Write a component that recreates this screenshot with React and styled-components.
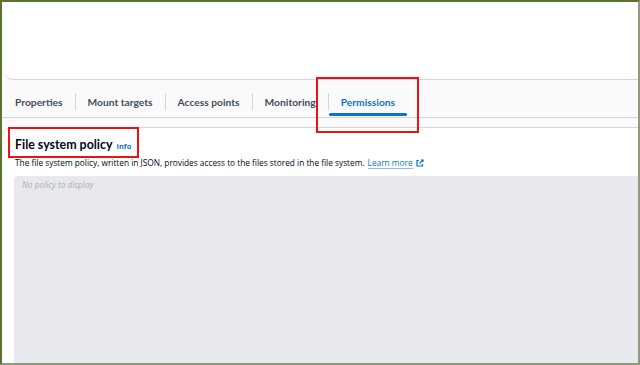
import React from 'react';
import styled, { createGlobalStyle } from 'styled-components';

const GlobalStyle = createGlobalStyle`
  html, body {
    margin: 0;
    padding: 0;
    background: #ffffff;
  }
  body {
    font-family: "Open Sans", "Noto Sans", sans-serif;
    color: #000716;
  }
`;

const Frame = styled.div`
  position: relative;
  box-sizing: border-box;
  width: 640px;
  height: 365px;
  overflow: hidden;
  background: #fafafa;
  border-top: 2px solid #5b7331;
  border-left: 2px solid #5b7331;
  border-right: 2px solid #8d9c80;
  border-bottom: 2px solid #8d9c80;
  display: flex;
  flex-direction: column;
`;

const TopCard = styled.div`
  height: 77px;
  margin-left: 3px;
  background: #ffffff;
  border-bottom: 1px solid #d5d5d9;
  border-bottom-left-radius: 8px;
  flex-shrink: 0;
`;

const TabBar = styled.div`
  display: flex;
  align-items: stretch;
  height: 37px;
  padding-left: 1px;
  border-bottom: 1px solid #d5d5d9;
  flex-shrink: 0;
`;

const Tab = styled.div`
  position: relative;
  display: flex;
  align-items: center;
  padding: 7px 12px 0;
  font-family: Lato, "Open Sans", sans-serif;
  font-size: 10.25px;
  font-weight: 700;
  color: ${(p) => (p.$active ? '#0972d3' : '#414d5c')};

  &::after {
    content: '';
    position: absolute;
    left: 0;
    right: 0;
    bottom: 1px;
    height: 3px;
    border-radius: 2px;
    background: ${(p) => (p.$active ? '#0972d3' : 'transparent')};
  }
`;

const Divider = styled.span`
  align-self: center;
  width: 1px;
  height: 17px;
  margin-top: 5px;
  background: #d5d5d9;
`;

const Spacer = styled.div`
  height: 9px;
  flex-shrink: 0;
`;

const ContentCard = styled.section`
  flex: 1;
  margin-left: 2px;
  background: #ffffff;
  border-top: 1px solid #d5d5d9;
  border-top-left-radius: 8px;
  padding: 8px 0 0 11px;
  display: flex;
  flex-direction: column;
`;

const Heading = styled.h2`
  display: flex;
  align-items: baseline;
  gap: 4px;
  margin: 0;
  font-family: Lato, "Open Sans", sans-serif;
  font-size: 12.4px;
  font-weight: 700;
  color: #000716;
  line-height: 18px;
`;

const InfoLink = styled.span`
  font-family: "Open Sans", sans-serif;
  font-size: 7.4px;
  font-weight: 700;
  color: #0972d3;
`;

const Description = styled.p`
  margin: 2px 0 0;
  font-size: 8.3px;
  line-height: 12px;
  color: #000716;
  display: flex;
  align-items: center;
`;

const LearnMore = styled.span`
  margin-left: 3px;
  color: #0972d3;
  border-bottom: 1px solid #8cbcf0;
  line-height: 10px;
`;

const ExternalIcon = styled.svg`
  margin-left: 3px;
  width: 8px;
  height: 8px;
`;

const PolicyBox = styled.div`
  flex: 1;
  margin-top: 7px;
  margin-left: -1px;
  background: #e9e9ed;
  border-top-left-radius: 4px;
  padding: 3px 8px;
  font-size: 8.3px;
  font-style: italic;
  color: #a8adb5;
`;

const Annotation = styled.div`
  position: absolute;
  box-sizing: border-box;
  border: 2px solid #ee1111;
  pointer-events: none;
`;

const tabs = ['Properties', 'Mount targets', 'Access points', 'Monitoring', 'Permissions'];

export default function App() {
  return (
    <>
      <GlobalStyle />
      <Frame>
        <TopCard />
        <TabBar>
          {tabs.map((t, i) => (
            <React.Fragment key={t}>
              {i > 0 && <Divider />}
              <Tab $active={t === 'Permissions'}>{t}</Tab>
            </React.Fragment>
          ))}
        </TabBar>
        <Spacer />
        <ContentCard>
          <Heading>
            File system policy
            <InfoLink>Info</InfoLink>
          </Heading>
          <Description>
            The file system policy, written in JSON, provides access to the files stored in the file system.
            <LearnMore>Learn more</LearnMore>
            <ExternalIcon viewBox="0 0 16 16" fill="none" stroke="#0972d3" strokeWidth="2.4">
              <path d="M10 2h4v4" />
              <path d="M14 2L7 9" />
              <path d="M6 3H2v11h11v-4" />
            </ExternalIcon>
          </Description>
          <PolicyBox>No policy to display</PolicyBox>
        </ContentCard>
        <Annotation style={{ left: 314, top: 75, width: 103, height: 56 }} />
        <Annotation style={{ left: 6, top: 125, width: 131, height: 31 }} />
      </Frame>
    </>
  );
}
